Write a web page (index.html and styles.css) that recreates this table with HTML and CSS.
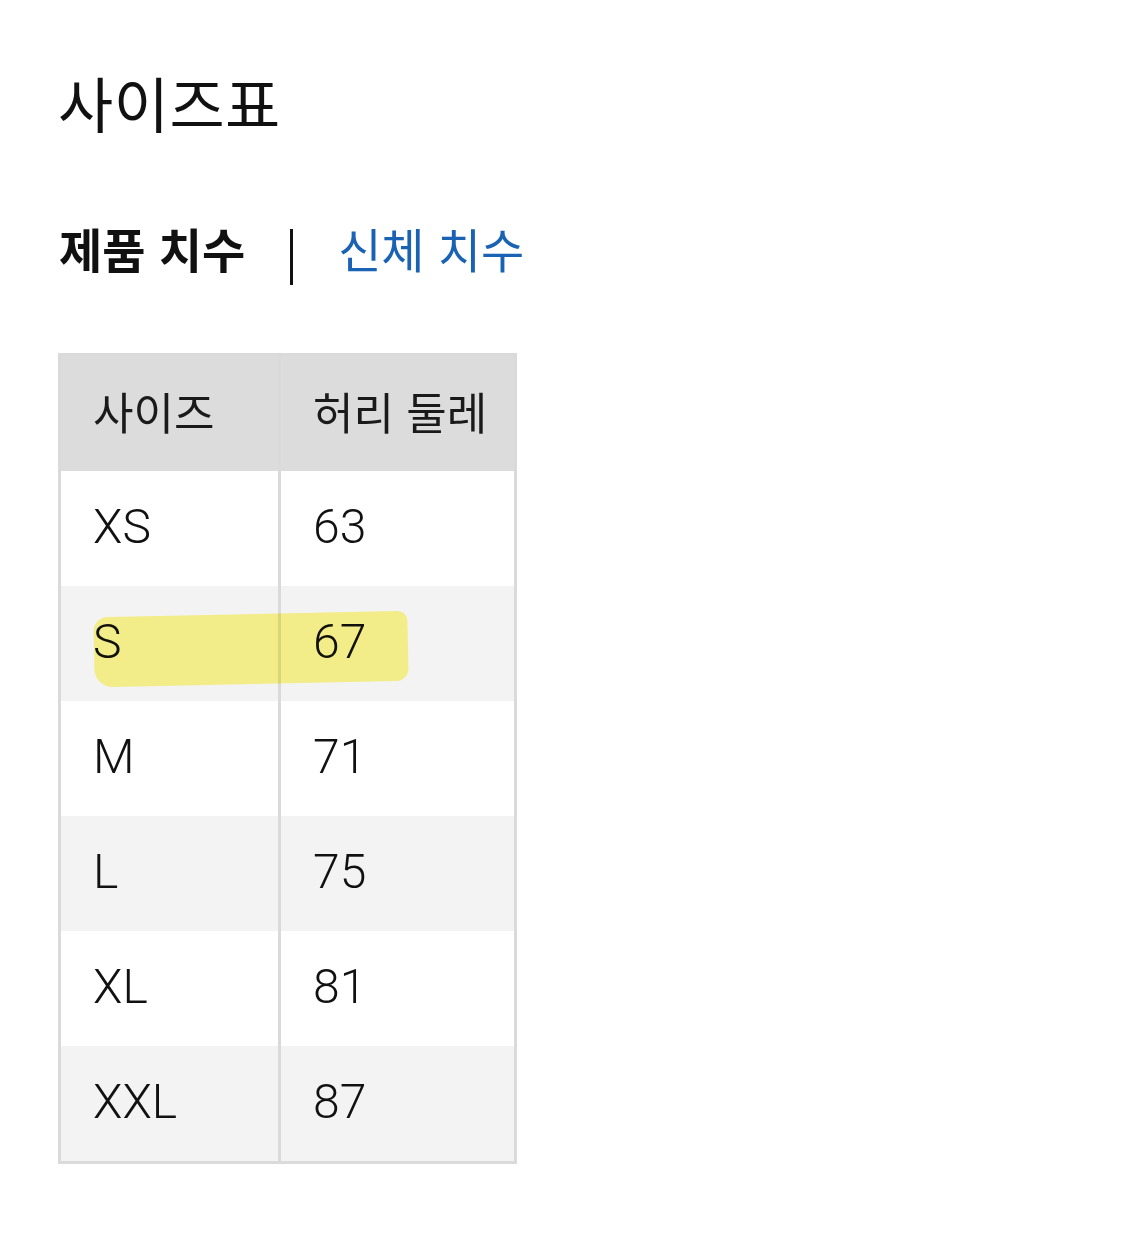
FILE: index.html
```html
<!DOCTYPE html>
<html lang="ko">
<head>
<meta charset="utf-8">
<link rel="stylesheet" href="styles.css">
</head>
<body>
<main class="page">
  <h1 class="title">사이즈표</h1>
  <nav class="tabs">
    <span class="tab active">제품 치수</span>
    <span class="sep"></span>
    <span class="tab link">신체 치수</span>
  </nav>
  <div class="table-wrap">
    <table class="size-table">
      <thead>
        <tr><th>사이즈</th><th>허리 둘레</th></tr>
      </thead>
      <tbody>
        <tr><td>XS</td><td>63</td></tr>
        <tr><td>S</td><td>67</td></tr>
        <tr><td>M</td><td>71</td></tr>
        <tr><td>L</td><td>75</td></tr>
        <tr><td>XL</td><td>81</td></tr>
        <tr><td>XXL</td><td>87</td></tr>
      </tbody>
    </table>
    <div class="highlight"></div>
  </div>
</main>
</body>
</html>
```
FILE: styles.css
```css
html, body {
  margin: 0;
  padding: 0;
  background: #ffffff;
}
body {
  font-family: "Roboto", "Noto Sans CJK KR", sans-serif;
  color: #111111;
}
.page {
  padding: 62px 0 0 58px;
}
.title {
  margin: 0;
  font-family: "Noto Sans CJK KR", sans-serif;
  font-weight: 400;
  font-size: 60px;
  line-height: 80px;
  letter-spacing: 0.5px;
  padding-left: 0;
}
.tabs {
  display: flex;
  align-items: center;
  margin-top: 77px;
  height: 56px;
  font-family: "Noto Sans CJK KR", sans-serif;
  font-size: 47px;
}
.tab.active {
  font-weight: 700;
  color: #111;
  padding-left: 1px;
}
.sep {
  width: 3px;
  height: 56px;
  background: #111;
  margin: 20px 45px 0 45px;
}
.tab.link {
  color: #1a62b4;
}
.table-wrap {
  position: relative;
  margin-top: 78px;
  width: 459px;
}
.size-table {
  border-collapse: collapse;
  border: 3px solid #dadada;
  width: 459px;
  table-layout: fixed;
}
.size-table th,
.size-table td {
  padding: 0 0 4px 32px;
  text-align: left;
  font-weight: 300;
  vertical-align: middle;
  border-left: 3px solid #dadada;
}
.size-table th:first-child,
.size-table td:first-child {
  width: 185px;
  border-left: none;
}
.size-table th {
  height: 109px;
  background: #dcdcdc;
  font-family: "Noto Sans CJK KR", sans-serif;
  font-size: 44px;
  font-weight: 400;
  color: #1a1a1a;
  padding-bottom: 6px;
}
.size-table td {
  height: 111px;
  font-size: 48px;
  color: #111;
}
.size-table tbody tr:nth-child(odd) td {
  background: #ffffff;
}
.size-table tbody tr:nth-child(even) td {
  background: #f3f3f3;
}
.highlight {
  position: absolute;
  left: 36px;
  top: 261px;
  width: 314px;
  height: 70px;
  background: #fff990;
  mix-blend-mode: multiply;
  border-radius: 14px 10px 12px 18px;
  transform: rotate(-1.2deg);
}
```
